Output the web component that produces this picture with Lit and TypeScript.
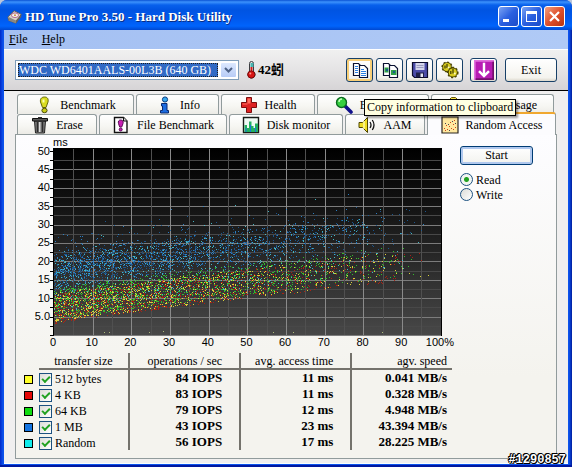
import { LitElement, html, svg, css, TemplateResult } from "lit";
import { customElement, state } from "lit/decorators.js";
import { classMap } from "lit/directives/class-map.js";

type Icon = TemplateResult;

const icon = (body: unknown, size = 18): Icon => html`
  <svg class="icon" width=${size} height=${size} viewBox="0 0 18 18" aria-hidden="true">${body}</svg>
`;

const icons = {
  drive: () => icon(svg`
    <path d="M1 9 8 2l8 4-6 10-8-3z" fill="#d8d3c8" stroke="#5c5a58"/>
    <path d="M2 9 10 13v3l-8-3z" fill="#8a8780"/>
    <path d="M10 13 16 6v3l-6 7z" fill="#6b6258"/>
    <ellipse cx="9" cy="7" rx="4" ry="2.6" fill="#f7f3ea" stroke="#a58"/>
    <circle cx="9" cy="7" r="1" fill="#c77b28"/>`),
  benchmark: () => icon(svg`
    <path d="M9.500 1C6 1 5 3.500 5.500 6l2 5.500h3.500l2-5.500C13.500 3.500 13 1 9.500 1z" fill="#d8dc20" stroke="#63650c"/>
    <path d="M7.500 3.500h2v3h-2z" fill="#fcffb4"/>
    <ellipse cx="9.500" cy="14.500" rx="2.600" ry="2.200" fill="#c9cc18" stroke="#4a4c08"/>`),
  info: () => icon(svg`
    <circle cx="10" cy="3.500" r="2.600" fill="#38a8ee" stroke="#0b3c80"/>
    <path d="M6.500 7.500h5.500v7h1.500v2.500h-8v-2.500h2v-4.500h-1z" fill="#1b6be0" stroke="#0a2a70"/>`),
  health: () => icon(svg`
    <path d="M6.500 1.500h5v5h5v5h-5v5h-5v-5h-5v-5h5z" fill="#dd2222" stroke="#7c0c0c"/>
    <path d="M7.500 2.500h3v5h-3zM2.500 7.500h5v1h-5z" fill="#ff6e5e"/>`),
  magnifier: () => icon(svg`
    <path d="m10 10 6 6" stroke="#10108c" stroke-width="3.600" stroke-linecap="round"/>
    <circle cx="6.500" cy="6.500" r="5" fill="#36d040" stroke="#0c6a20" stroke-width="1.400"/>
    <path d="M4 6a3 3 0 0 1 3-3" stroke="#c8ffc0" fill="none" stroke-width="1.400"/>`),
  folder: () => icon(svg`
    <path d="M1.500 3.500l2-2h4l2 2h7v12h-15z" fill="#f4e04a" stroke="#6a5a08"/>
    <path d="M2.500 6h13" stroke="#fffbb8"/>`),
  trash: () => icon(svg`
    <path d="M3.500 5h11l-1 12h-9z" fill="#808080" stroke="#202020"/>
    <path d="M6.500 6v10M11.500 6v10" stroke="#2c2c2c" stroke-width="1.600"/>
    <path d="M8.700 6v10" stroke="#dcdcdc" stroke-width="1.400"/>
    <path d="M1.500 2.500h15v2.500h-15z" fill="#5c5c5c" stroke="#101010"/>
    <path d="M7 1h4v1.500H7z" fill="#303030"/>`),
  file: () => icon(svg`
    <path d="M2.500 1.500h9l3.500 3.500v11.500H2.500z" fill="#fff" stroke="#111" stroke-width="1.400"/>
    <path d="M11.500 1.500V5H15" fill="#ddd" stroke="#111"/>
    <path d="M8.700 4C6.500 4 6 5.500 6.500 7.500l1.200 3.500h2l1.300-3.500C11.500 5.500 11 4 8.700 4z" fill="#c81fb4" stroke="#5c0c58"/>
    <circle cx="8.700" cy="13.500" r="1.500" fill="#c81fb4" stroke="#5c0c58"/>`),
  monitor: () => icon(svg`
    <path d="M1.500 1.500h15v15h-15z" fill="#eefaf4" stroke="#181c18" stroke-width="1.400"/>
    <path d="M2.500 16V9h2.500v3h2V5.500h2.500V10h2V12h1.500V7.500h3V16z" fill="#22b060"/>
    <path d="M3.500 16v-4h1v4zM8 16V9h1v7zM13 16v-5h1v5z" fill="#1478d8"/>`),
  speaker: () => icon(svg`
    <path d="M1 6.500h3.500L9.500 1.500v15L4.500 11.500H1z" fill="#f0dc20" stroke="#4c4400"/>
    <path d="M6 5v8" stroke="#fffbb0" stroke-width="1.400"/>
    <path d="M12 6q2 3 0 6M14.300 4q3.400 5 0 10" fill="none" stroke="#141414" stroke-width="1.300"/>`),
  random: () => icon(svg`
    <path d="M1 1h16v16H1z" fill="#ffe9a0" stroke="#2a2620" stroke-width="1.200"/>
    <path d="M3 12h1v1H3zM5 9h1v1H5zM6 13h1v1H6zM8 10h1v1H8zM9 6h1v1H9zM10 12h1v1h-1zM12 8h1v1h-1zM13 4h1v1h-1zM14 11h1v1h-1zM4 14h1v1H4zM12 13h1v1h-1z" fill="#d04818"/>
    <path d="M4 7h1v1H4zM7 8h1v1H7zM11 5h1v1h-1zM14 7h1v1h-1zM8 14h1v1H8z" fill="#445"/>`),
  copyText: () => icon(svg`
    <path d="M2.500 2.500h5l2.500 2.500v9.500H2.500z" fill="#fff" stroke="#0a1030" stroke-width="1.200"/>
    <path d="M8.500 4.500h5l3 3v9h-8z" fill="#fff" stroke="#0a1030" stroke-width="1.200"/>
    <path d="M4 5.500h3M4 7.500h3M4 9.500h3M4 11.500h3M10 8.500h3M10 10.500h5M10 12.500h5M10 14.500h5" stroke="#2d7fe0"/>`),
  copyImage: () => icon(svg`
    <path d="M2.500 2.500h5l2.500 2.500v9.500H2.500z" fill="#fff" stroke="#0a1030" stroke-width="1.200"/>
    <path d="M8.500 4.500h5l3 3v9h-8z" fill="#fff" stroke="#0a1030" stroke-width="1.200"/>
    <path d="M3.500 6.500h4v5h-4zM10 9h5.500v5H10z" fill="#2f9e48"/>
    <path d="M5 8h2v2H5zM12 10h2v2h-2z" fill="#185c8c"/>`),
  floppy: () => icon(svg`
    <path d="M1.500 1.500h15v15h-13l-2-2z" fill="#4c4ca8" stroke="#0c0c2c" stroke-width="1.200"/>
    <path d="M4.500 2h9v7h-9z" fill="#d6d6ea"/>
    <path d="M5.500 4.500h7M5.500 6.500h7" stroke="#9c9cc0"/>
    <path d="M5 11.500h8V16H5z" fill="#202048"/>
    <path d="M9.500 12.500H12V16H9.500z" fill="#e6e6f4"/>`),
  gears: () => icon(svg`
    <circle cx="6" cy="6" r="4.800" fill="#4c4600" stroke="#4c4600" stroke-width="1.600" stroke-dasharray="2 1.700"/>
    <circle cx="6" cy="6" r="3.900" fill="#d8cc20"/>
    <circle cx="11.800" cy="11.500" r="5" fill="#4c4600" stroke="#4c4600" stroke-width="1.600" stroke-dasharray="2 1.700"/>
    <circle cx="11.800" cy="11.500" r="4" fill="#d8cc20"/>
    <path d="M6 3v4M12 8v4.500M4 4.500v3M9.800 10v3" stroke="#3c3800" stroke-width="1.200"/>
    <circle cx="7.600" cy="6.500" r="1" fill="#fffbc0"/><circle cx="13.800" cy="12.500" r="1" fill="#fffbc0"/>`),
  arrow: () => icon(svg`
    <path d="M0 0h18v18H0z" fill="#b81cb4"/>
    <path d="M0 0h18v1.500H1.500V18H0z" fill="#e070dc"/>
    <path d="M16.500 1.500H18V18H1.500v-1.500h15z" fill="#74106c"/>
    <path d="M9 2.500v12M4.500 10 9 14.500 13.500 10" fill="none" stroke="#fff" stroke-width="2.200"/>`, 20),
  thermometer: () => html`
    <svg class="icon" width="10" height="18" viewBox="0 0 10 18" aria-hidden="true">
      <path d="M3.500 2.500a2 2 0 0 1 4 0v8a3.600 3.600 0 1 1-4 0z" fill="#e8ecec" stroke="#3c3c40"/>
      <path d="M4.500 6h2v6h-2z" fill="#d01818"/>
      <path d="M4.500 2h3v4h-3z" fill="#48b4b0"/>
      <circle cx="5.300" cy="13.500" r="3.600" fill="#d81414" stroke="#7c0808"/>
      <circle cx="4.300" cy="12.500" r="1" fill="#ff9a90"/>
    </svg>`,
};

interface Series {
  label: string;
  color: string;
  iops: number;
  access: number;
  speed: string;
}

const SERIES: Series[] = [
  { label: "512 bytes", color: "#ffff28", iops: 84, access: 11, speed: "0.041" },
  { label: "4 KB", color: "#e40808", iops: 83, access: 11, speed: "0.328" },
  { label: "64 KB", color: "#10dc10", iops: 79, access: 12, speed: "4.948" },
  { label: "1 MB", color: "#1474e0", iops: 43, access: 23, speed: "43.394" },
  { label: "Random", color: "#10ecec", iops: 56, access: 17, speed: "28.225" },
];

/* Deterministic generator, so that the samples stay put between renders. */
function generator(seed: number): () => number {
  let a = seed;
  return () => {
    a = (a + 0x6d2b79f5) | 0;
    let t = Math.imul(a ^ (a >>> 15), 1 | a);
    t = (t + Math.imul(t ^ (t >>> 7), 61 | t)) ^ t;
    return ((t ^ (t >>> 14)) >>> 0) / 4294967296;
  };
}

const xAt = (percent: number) => 4 + percent * 3.867;
const yAt = (ms: number) => 187 - ms * 3.68;

function samples(
  seed: number,
  count: number,
  delay: (next: () => number) => number,
): string {
  const next = generator(seed);
  let d = "";
  for (let i = 0; i < count; i++) {
    const p = 98 * (1 - Math.pow(1 - next(), 0.48));
    const ms = 3 + 0.11 * p + Math.sqrt(p) * 0.2 + delay(next);
    d += `M${Math.round(xAt(p))} ${Math.round(yAt(ms))}h1v1h-1z`;
  }
  return d;
}

const CLOUDS = [
  { color: "#1c5c98", d: samples(11, 1500, (n) => 8 + (n() + n()) * 6 + (n() < 0.12 ? n() * 7 : 0)) },
  { color: "#2c88d4", d: samples(17, 700, (n) => 8 + (n() + n()) * 6 + (n() < 0.12 ? n() * 8 : 0)) },
  { color: "#48c4d0", d: samples(23, 900, (n) => 3 + n() * 15 + (n() < 0.1 ? n() * 9 : 0)) },
  { color: "#b82010", d: samples(37, 1300, (n) => n() * 8) },
  { color: "#34cc2c", d: samples(41, 1300, (n) => 1 + n() * 8.5) },
  { color: "#e8e03c", d: samples(59, 850, (n) => 0.3 + n() * 8) },
  { color: "#b8c880", d: "M54 184h1v1h-1zM59 184h1v1h-1zM99 184h1v1h-1zM113 183h1v1h-1zM223 184h1v1h-1zM243 184h1v1h-1zM332 184h1v1h-1z" },
];

@customElement("access-chart")
export class AccessChart extends LitElement {
  static styles = css`
    :host {
      display: grid;
      grid-template-columns: 26px 1fr;
      grid-template-rows: 13px 188px 14px;
      font: 11px/13px "Liberation Sans", sans-serif;
      color: #000;
    }
    .unit { grid-column: 2; padding-left: 3px; line-height: 15px; }
    .y-axis, .x-axis { display: flex; justify-content: space-between; }
    .y-axis { flex-direction: column; padding: 3px 0 1px; }
    .y-axis span { display: flex; height: 0; align-items: center; justify-content: flex-end; }
    .x-axis { grid-column: 2; padding: 0 2px 0 3px; }
    .x-axis span { display: flex; width: 0; justify-content: center; }
    .plot { display: block; width: 100%; height: 188px; shape-rendering: crispEdges; }
  `;

  render() {
    const half = Array.from({ length: 21 }, (_, i) => i);
    return html`
      <div class="unit">ms</div>
      <div class="y-axis">
        ${["50", "45", "40", "35", "30", "25", "20", "15", "10", "5.0", ""].map((t) => html`<span>${t}</span>`)}
      </div>
      <svg class="plot" viewBox="0 0 392 188" preserveAspectRatio="none" role="img"
        aria-label="Access time by position on the disk">
        <defs>
          <linearGradient id="shade" x1="0" y1="0" x2="0" y2="1">
            <stop offset="0" stop-color="#000" />
            <stop offset="0.300" stop-color="#121212" />
            <stop offset="1" stop-color="#484848" />
          </linearGradient>
        </defs>
        <rect x="3" y="0" width="389" height="188" fill="url(#shade)" />
        ${half.map((i) => svg`
          <rect x="0" y=${Math.round(yAt(i * 2.5))} width="4" height="1" fill="#000" />
          <rect x="4" y=${Math.round(yAt(i * 2.5))} width="387" height="1" fill=${i % 2 ? "#484848" : "#7c7c7c"}
            visibility=${i === 20 ? "hidden" : "visible"} />`)}
        ${half.map((i) => svg`
          <rect x=${Math.round(xAt(i * 5))} y="1" width="1" height="186" fill=${i % 2 ? "#505050" : "#8a8a8a"}
            visibility=${i === 0 ? "hidden" : "visible"} />`)}
        ${CLOUDS.map((c) => svg`<path d=${c.d} fill=${c.color} fill-opacity="0.9" />`)}
        <rect x="3" y="0" width="1" height="188" fill="#000" />
        <rect x="391" y="0" width="1" height="188" fill="#000" />
      </svg>
      <div class="x-axis">
        ${[0, 10, 20, 30, 40, 50, 60, 70, 80, 90, 100].map((n) => html`<span>${n === 100 ? "100%" : n}</span>`)}
      </div>
    `;
  }
}

@customElement("result-table")
export class ResultTable extends LitElement {
  static styles = css`
    :host { display: block; font: 12px/14px "Liberation Serif", serif; color: #000; }
    table { width: 100%; border-collapse: collapse; table-layout: fixed; }
    .c-swatch { width: 15px; }
    .c-size { width: 21%; }
    .c-ops { width: 26%; }
    .c-time { width: 26%; }
    th, td { padding: 0; height: 16px; text-align: right; white-space: nowrap; }
    th { height: 14px; font-weight: normal; }
    th.ruled { border-bottom: 2px solid #74726c; }
    th.size { text-align: center; }
    td { font-size: 13px; font-weight: bold; }
    td.size { text-align: left; font-size: 12px; font-weight: normal; }
    td.swatch-cell { text-align: left; }
    .bar { border-left: 2px solid #74726c; }
    .wide { padding-right: 17px; }
    .end { padding-right: 5px; }
    .swatch { display: block; box-sizing: border-box; width: 9px; height: 9px; margin-top: 3px; border: 1px solid #000; }
    label { display: flex; align-items: center; gap: 3px; height: 16px; padding-top: 2px; box-sizing: border-box; }
    input {
      appearance: none; box-sizing: border-box; flex: none; width: 13px; height: 13px; margin: 0;
      border: 1px solid #1c5180; background: linear-gradient(135deg, #dcdcd7, #fff);
    }
    input:checked::before {
      content: ""; display: block; width: 6px; height: 3px; margin: 2px auto 0;
      border: solid #21a121; border-width: 0 0 2px 2px; transform: rotate(-45deg);
    }
  `;

  render() {
    return html`
      <table>
        <colgroup>
          <col class="c-swatch" /><col class="c-size" /><col class="c-ops" /><col class="c-time" /><col />
        </colgroup>
        <thead>
          <tr>
            <td></td>
            <th class="ruled size">transfer size</th>
            <th class="ruled bar wide">operations / sec</th>
            <th class="ruled bar wide">avg. access time</th>
            <th class="ruled bar end">agv. speed</th>
          </tr>
        </thead>
        <tbody>
          ${SERIES.map((s) => html`
            <tr>
              <td class="swatch-cell"><span class="swatch" style="background:${s.color}"></span></td>
              <td class="size"><label><input type="checkbox" checked />${s.label}</label></td>
              <td class="bar wide">${s.iops} IOPS</td>
              <td class="bar wide">${s.access} ms</td>
              <td class="bar end">${s.speed} MB/s</td>
            </tr>`)}
        </tbody>
      </table>
    `;
  }
}

interface Tab { label: string; icon: () => Icon; }

const BACK_TABS: Tab[] = [
  { label: "Benchmark", icon: icons.benchmark },
  { label: "Info", icon: icons.info },
  { label: "Health", icon: icons.health },
  { label: "Error Scan", icon: icons.magnifier },
  { label: "Folder Usage", icon: icons.folder },
];

const FRONT_TABS: Tab[] = [
  { label: "Erase", icon: icons.trash },
  { label: "File Benchmark", icon: icons.file },
  { label: "Disk monitor", icon: icons.monitor },
  { label: "AAM", icon: icons.speaker },
  { label: "Random Access", icon: icons.random },
];

@customElement("app-root")
export class AppRoot extends LitElement {
  @state() private selected = "Random Access";

  static styles = css`
    :host {
      display: block;
      background: #b9c6dc;
      font: 12px/14px "Liberation Serif", "Noto Sans CJK TC", serif;
      color: #000;
    }
    button, select { font: inherit; color: inherit; padding: 0; margin: 0; }
    .icon { display: block; flex: none; }
    .window {
      position: relative; box-sizing: border-box; min-height: 100vh;
      display: flex; flex-direction: column;
      padding: 0 4px 4px; border-radius: 7px 7px 0 0;
      background: linear-gradient(90deg, #0028c8, #0c52ec 3px, #0c52ec calc(100% - 3px), #001c9c);
      box-shadow: inset 0 -3px 0 #0018a0;
    }
    .titlebar {
      display: flex; align-items: center; gap: 2px; height: 30px; margin: 0 -4px; padding: 3px 7px 0 7px;
      box-sizing: border-box; border-radius: 7px 7px 0 0;
      background: linear-gradient(#0a52d4 0, #3c92fc 2px, #0860ec 5px, #0054e2 10px, #0058ec 18px, #0064fc 26px, #0048d0 30px);
    }
    .titlebar .icon { width: 16px; height: 16px; }
    h1 { flex: 1; margin: 0; font: bold 13px/18px "Liberation Serif", serif; color: #fff; text-shadow: 1px 1px 0 #0c2c80; }
    .control {
      display: grid; place-items: center; box-sizing: border-box; width: 21px; height: 21px;
      border: 1px solid #fff; border-radius: 3px; background: linear-gradient(135deg, #7ca4f4, #2a5fe0 50%, #1c4cc8);
    }
    .close { background: linear-gradient(135deg, #f0a080, #e0502c 50%, #b83410); }
    .menubar { display: flex; gap: 14px; height: 19px; padding-left: 5px; background: linear-gradient(90deg, #a4c0f2, #b0caf6); }
    .menu { border: 0; background: none; line-height: 19px; }
    .toolbar {
      display: flex; align-items: center; gap: 3px; height: 42px; padding: 0 11px; box-sizing: border-box;
      background: linear-gradient(#f0f0f0, #e6e5e6 45%, #d6d4d6); border-bottom: 1px solid #000; border-top: 1px solid #fff;
    }
    .drives { display: flex; flex: 0 1 224px; box-sizing: border-box; height: 20px; padding: 2px; border: 1px solid #7f9db9; background: #fff; }
    .drives select {
      appearance: none; flex: 1; min-width: 0; border: 1px dotted #1c1c1c; border-radius: 0;
      background: #316ac5; color: #fff; line-height: 12px; outline: none;
    }
    .chevron { display: grid; place-items: center; width: 15px; margin-left: 3px; border-radius: 1px; background: linear-gradient(#dce8fe, #b8ccf6); }
    .temperature { display: flex; align-items: center; gap: 2px; margin: 0 auto 0 4px; font: bold 13px/18px "Liberation Serif", "Noto Sans CJK TC", serif; }
    .tool {
      display: grid; place-items: center; box-sizing: border-box; width: 27px; height: 24px;
      border: 1px solid #174068; border-radius: 3px; background: linear-gradient(#fff, #f4f3ee 85%, #dcd8cc);
    }
    .tool.hot { box-shadow: inset 0 0 0 2px #f8cf78; }
    .download { margin-left: 4px; }
    .exit { width: 52px; margin-left: 5px; }
    .content { flex: 1; display: flex; flex-direction: column; padding: 3px 11px 4px; background: #f0efef; border-bottom: 1px solid #f8ffff; }
    .tabs { display: grid; gap: 2px; height: 20px; padding: 0 1px 0 2px; }
    .back { grid-template-columns: 117fr 83fr 94fr 112fr 123fr; padding-right: 3px; }
    .front { grid-template-columns: 80fr 128fr 114fr 80fr 129fr; }
    .tab {
      display: flex; align-items: center; justify-content: center; gap: 7px; box-sizing: border-box; height: 20px;
      border: 1px solid #919b9c; border-bottom: 0; border-radius: 3px 3px 0 0; white-space: nowrap;
      background: linear-gradient(#fff, #f6f6f2 60%, #ecebe6); overflow: hidden; line-height: 18px;
    }
    .tab.selected { height: 23px; margin-top: -2px; border-top: 2px solid #f0a830; background: #fcfcfe; position: relative; }
    .panel {
      flex: 1; display: grid; grid-template-columns: 1fr 104px; align-items: start;
      box-sizing: border-box; padding: 0 0 8px 8px; border: 1px solid #919b9c;
      background: linear-gradient(#fdfdff, #f4f3ee 75%);
    }
    .results { display: grid; gap: 3px; }
    access-chart { margin-right: 10px; }
    .options { display: flex; flex-direction: column; align-items: flex-start; padding: 11px 8px 0; }
    .start {
      box-sizing: border-box; width: 73px; height: 19px; margin-bottom: 7px; border: 1px solid #003c74; border-radius: 3px;
      background: linear-gradient(#fff, #f2f2ee); box-shadow: inset 0 0 0 2px #b0c8ee; line-height: 15px;
    }
    .options label { display: flex; align-items: center; gap: 3px; height: 15px; }
    input {
      appearance: none; box-sizing: border-box; width: 13px; height: 13px; margin: 0; border: 1px solid #1c5180;
      border-radius: 50%; background: linear-gradient(135deg, #dcdcd7, #fff);
    }
    input:checked { background: radial-gradient(circle, #21a121 2px, #f2f5f2 3px); }
    .tooltip {
      position: absolute; top: 99px; left: 364px; padding: 0 2px; border: 1px solid #000; background: #ffffe1;
      line-height: 15px; white-space: nowrap; box-shadow: 2px 2px 2px #0006;
    }
    .stamp {
      position: absolute; right: 6px; bottom: 1px; font: bold 12px/14px "Liberation Mono", monospace; color: #fff;
      text-shadow: -1px 0 #000, 1px 0 #000, 0 -1px #000, 0 1px #000, 1px 1px #000, -1px -1px #000;
    }
  `;

  private tab(tab: Tab) {
    const selected = tab.label === this.selected;
    return html`
      <button class=${classMap({ tab: true, selected })} role="tab" aria-selected=${selected}
        @click=${() => (this.selected = tab.label)}>${tab.icon()}${tab.label}</button>
    `;
  }

  render() {
    return html`
      <div class="window">
        <header class="titlebar">
          ${icons.drive()}
          <h1>HD Tune Pro 3.50 - Hard Disk Utility</h1>
          <button class="control" aria-label="Minimize">
            <svg width="13" height="13"><path d="M1 9h6v3H1z" fill="#fff" /></svg>
          </button>
          <button class="control" aria-label="Maximize">
            <svg width="13" height="13"><path d="M1 1h11v11H1zM2 4v7h9V4z" fill="#fff" fill-rule="evenodd" /></svg>
          </button>
          <button class="control close" aria-label="Close">
            <svg width="13" height="13"><path d="m2 2 9 9m0-9-9 9" stroke="#fff" stroke-width="2.200" /></svg>
          </button>
        </header>
        <nav class="menubar">
          <button class="menu"><u>F</u>ile</button>
          <button class="menu"><u>H</u>elp</button>
        </nav>
        <div class="toolbar">
          <div class="drives">
            <select aria-label="Drive"><option>WDC WD6401AALS-00L3B (640 GB)</option></select>
            <span class="chevron">
              <svg width="9" height="7"><path d="m1 1 3.500 3.500L8 1" fill="none" stroke="#4d6185" stroke-width="2" /></svg>
            </span>
          </div>
          <div class="temperature">${icons.thermometer()}<span>42蚓</span></div>
          <button class="tool hot" aria-label="Copy information to clipboard">${icons.copyText()}</button>
          <button class="tool" aria-label="Copy screenshot to clipboard">${icons.copyImage()}</button>
          <button class="tool" aria-label="Save">${icons.floppy()}</button>
          <button class="tool" aria-label="Options">${icons.gears()}</button>
          <button class="tool download" aria-label="Minimize to tray">${icons.arrow()}</button>
          <button class="tool exit">Exit</button>
        </div>
        <main class="content">
          <div class="tabs back" role="tablist">${BACK_TABS.map((t) => this.tab(t))}</div>
          <div class="tabs front" role="tablist">${FRONT_TABS.map((t) => this.tab(t))}</div>
          <section class="panel">
            <div class="results">
              <access-chart></access-chart>
              <result-table></result-table>
            </div>
            <div class="options">
              <button class="start">Start</button>
              <label><input type="radio" name="mode" checked />Read</label>
              <label><input type="radio" name="mode" />Write</label>
            </div>
          </section>
        </main>
        <div class="tooltip" role="tooltip">Copy information to clipboard</div>
        <div class="stamp">#1290857</div>
      </div>
    `;
  }
}
